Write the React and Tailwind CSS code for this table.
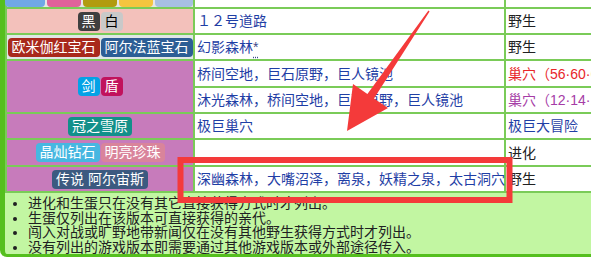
import React from 'react';

const font = { fontFamily: '"Liberation Sans", "Noto Sans CJK SC", sans-serif' };

function Badge({ bg, dark, children }) {
  return (
    <span className={`inline-block h-[19px] rounded-[4px] px-[4px] text-[14px] leading-[19px] ${bg} ${dark ? 'text-black' : 'text-white'}`}>
      {children}
    </span>
  );
}

function Link({ children }) {
  return <span className="text-[#1f3ea5]">{children}</span>;
}

const notes = [
  '进化和生蛋只在没有其它直接获得方式时才列出。',
  '生蛋仅列出在该版本可直接获得的亲代。',
  '闯入对战或旷野地带新闻仅在没有其他野生获得方式时才列出。',
  '没有列出的游戏版本即需要通过其他游戏版本或外部途径传入。',
];

export default function App() {
  return (
    <div className="relative w-[591px] h-[259px] overflow-hidden bg-white" style={font}>
      <div className="w-[760px] bg-[#c2f6a2] border-l-[5px] border-b-[3px] border-[#55bf1e] rounded-bl-[7px] overflow-hidden">
        <table className="table-fixed w-[743px] -mt-[2px] border-separate border-spacing-[2px] bg-[#7acb58] text-[14px] leading-[18px] text-[#202122] whitespace-nowrap">
          <colgroup>
            <col className="w-[186px]" />
            <col className="w-[309px]" />
            <col className="w-[240px]" />
          </colgroup>
          <tbody>
            <tr>
              <td className="h-[7px] p-0 bg-[#e6e6e6]">
                <div className="flex h-[7px] gap-[2px] -ml-[2px]">
                  <div className="w-[40px] rounded-b-[4px] bg-[#70a8e6]" />
                  <div className="w-[35px] rounded-b-[4px] bg-[#e0619a]" />
                  <div className="w-[34px] rounded-b-[4px] bg-[#b19b0f]" />
                  <div className="w-[35px] rounded-b-[4px] bg-[#f4c53f]" />
                  <div className="w-[38px] rounded-b-[4px] bg-[#a7bfe2]" />
                </div>
              </td>
              <td className="p-0 bg-white" />
              <td className="p-0 bg-white" />
            </tr>
            <tr>
              <td className="h-[24px] p-0 bg-[#f3c1bb]">
                <div className="flex justify-center gap-[1px]">
                  <Badge bg="bg-[#3f3f3f]">黑</Badge>
                  <Badge bg="bg-[#c9c9c9]" dark>白</Badge>
                </div>
              </td>
              <td className="p-0 pl-[2px] bg-white"><Link>１２号道路</Link></td>
              <td className="p-0 pl-[2px] bg-white">野生</td>
            </tr>
            <tr>
              <td className="h-[24px] p-0 bg-[#e0e6e6]">
                <div className="flex justify-center gap-[1px]">
                  <Badge bg="bg-[#a8291c]">欧米伽红宝石</Badge>
                  <Badge bg="bg-[#2c5e95]">阿尔法蓝宝石</Badge>
                </div>
              </td>
              <td className="p-0 pl-[2px] bg-white">
                <Link>幻影森林</Link>
                <span className="text-[#3b4a8a] underline decoration-dotted underline-offset-[5px]">*</span>
              </td>
              <td className="p-0 pl-[2px] bg-white">野生</td>
            </tr>
            <tr>
              <td rowSpan={2} className="p-0 bg-[#c77bbb]">
                <div className="flex justify-center gap-[1px]">
                  <Badge bg="bg-[#04a2e6]">剑</Badge>
                  <Badge bg="bg-[#c1125c]">盾</Badge>
                </div>
              </td>
              <td className="h-[25px] p-0 pl-[2px] bg-white"><Link>桥间空地，巨石原野，巨人镜池</Link></td>
              <td className="p-0 pl-[2px] bg-white text-[#e8262a]">巢穴（56·60·65·71）</td>
            </tr>
            <tr>
              <td className="h-[24px] p-0 pl-[2px] bg-white"><Link>沐光森林，桥间空地，巨石原野，巨人镜池</Link></td>
              <td className="p-0 pl-[2px] bg-white text-[#a63ca6]">巢穴（12·14·16·18）</td>
            </tr>
            <tr>
              <td className="h-[24px] p-0 bg-[#c77bbb]">
                <div className="flex justify-center">
                  <Badge bg="bg-[#12908a]">冠之雪原</Badge>
                </div>
              </td>
              <td className="p-0 pl-[2px] bg-white"><Link>极巨巢穴</Link></td>
              <td className="p-0 pl-[2px] bg-white"><Link>极巨大冒险</Link></td>
            </tr>
            <tr>
              <td className="h-[25px] p-0 bg-[#c77bbb]">
                <div className="flex justify-center gap-[1px]">
                  <Badge bg="bg-[#47b7e1]">晶灿钻石</Badge>
                  <Badge bg="bg-[#d9849b]">明亮珍珠</Badge>
                </div>
              </td>
              <td className="p-0 pl-[2px] bg-white" />
              <td className="p-0 pl-[2px] bg-white">进化</td>
            </tr>
            <tr>
              <td className="h-[24px] p-0 bg-[#c77bbb]">
                <div className="flex justify-center">
                  <Badge bg="bg-[#3c5a80]">传说 阿尔宙斯</Badge>
                </div>
              </td>
              <td className="p-0 pl-[2px] bg-white overflow-visible"><Link>深幽森林，大嘴沼泽，离泉，妖精之泉，太古洞穴</Link></td>
              <td className="p-0 pl-[2px] bg-white">野生</td>
            </tr>
          </tbody>
        </table>
        <ul className="list-disc pl-[23px] pt-[3px] text-[14px] leading-[14.5px] text-[#202122]">
          {notes.map((n) => (
            <li key={n}>{n}</li>
          ))}
        </ul>
      </div>

      <svg className="absolute left-0 top-0 pointer-events-none" width="591" height="259" viewBox="0 0 591 259">
        <polygon
          points="429.6,11.4 374,98.5 388,108 347,131 353,84 367.4,94 428.4,10.6"
          fill="#f43a3a"
        />
        <rect x="180.5" y="160" width="329" height="40" fill="none" stroke="#f43a3a" strokeWidth="6" />
      </svg>
    </div>
  );
}
